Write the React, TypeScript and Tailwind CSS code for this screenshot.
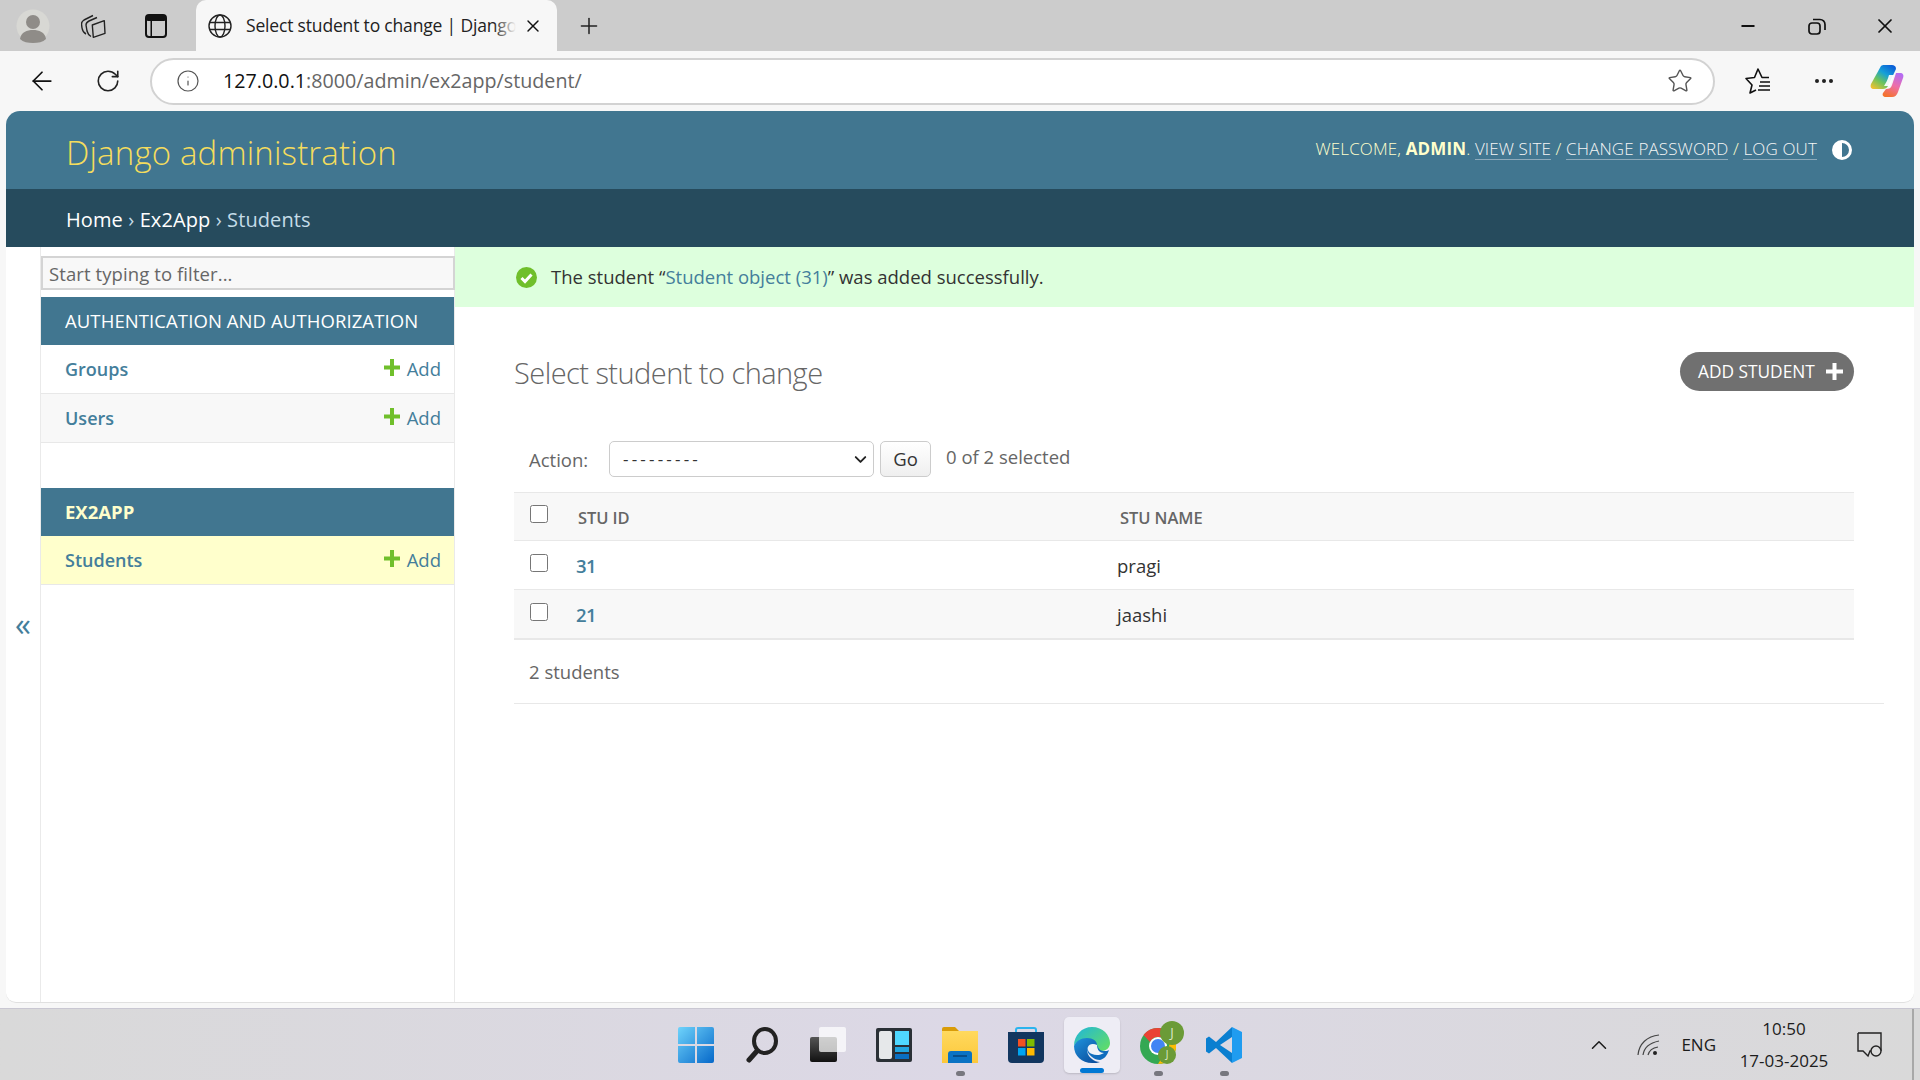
import React from "react";
import { ArrowLeft, RotateCw, Info, Star, Plus, X, Minus, ChevronDown, ChevronUp } from "lucide-react";

const base = "font-['Open_Sans',sans-serif]";

function GreenPlus() {
  return (
    <svg width="16" height="17" viewBox="0 0 16 17" className="mr-[7px] mb-[3px]">
      <path d="M6 0h4v6.500h6v4h-6V17H6v-6.500H0v-4h6z" fill="#70bf2b" />
    </svg>
  );
}

function SideRow({ name, bg }: { name: string; bg: string }) {
  return (
    <div className={`h-[49px] flex items-center pl-[24px] pr-[13px] border-b border-[#e8e8e8] ${bg}`}>
      <span className="text-[18px] font-semibold text-[#447e9b] flex-1">{name}</span>
      <GreenPlus />
      <span className="text-[18.500px] text-[#447e9b]">Add</span>
    </div>
  );
}

function Start() {
  return (
    <svg width="36" height="36" viewBox="0 0 36 36">
      <defs>
        <linearGradient id="st" x1="0" y1="0" x2="1" y2="1">
          <stop offset="0" stopColor="#6fd3fb" />
          <stop offset="1" stopColor="#0668c9" />
        </linearGradient>
      </defs>
      <path d="M2 0h15v17H0V2a2 2 0 0 1 2-2zM19 0h15a2 2 0 0 1 2 2v15H19zM0 19h17v17H2a2 2 0 0 1-2-2zM19 19h17v15a2 2 0 0 1-2 2H19z" fill="url(#st)" />
    </svg>
  );
}

function TaskSearch() {
  return (
    <svg width="32" height="36" viewBox="0 0 32 36" fill="none" stroke="#222" strokeLinecap="round">
      <ellipse cx="19" cy="14" rx="11" ry="12" strokeWidth="4" />
      <path d="M11 24 L3 33" strokeWidth="5" />
    </svg>
  );
}

function TaskView() {
  return (
    <svg width="36" height="36" viewBox="0 0 36 36">
      <defs>
        <linearGradient id="tv" x1="0" y1="0" x2="0" y2="1">
          <stop offset="0" stopColor="#555" />
          <stop offset="1" stopColor="#111" />
        </linearGradient>
      </defs>
      <rect x="0" y="10" width="27" height="25" rx="2" fill="url(#tv)" />
      <rect x="9" y="0" width="27" height="25" rx="2" fill="#ffffff" fillOpacity="0.72" />
    </svg>
  );
}

function Widgets() {
  return (
    <svg width="36" height="36" viewBox="0 0 36 36">
      <rect width="36" height="34" y="1" rx="2" fill="#2a3036" />
      <rect x="3" y="4" width="13" height="28" rx="2" fill="#e6e8ea" />
      <rect x="19" y="4" width="14" height="14" fill="#4fd8ff" />
      <rect x="19" y="20" width="14" height="5" fill="#21a6e0" />
      <rect x="19" y="27" width="14" height="5" fill="#0a6fc2" />
    </svg>
  );
}

function Files() {
  return (
    <svg width="36" height="36" viewBox="0 0 36 36">
      <defs>
        <linearGradient id="fo" x1="0" y1="0" x2="0" y2="1">
          <stop offset="0" stopColor="#ffd95e" />
          <stop offset="1" stopColor="#fcc73a" />
        </linearGradient>
      </defs>
      <path d="M0 2a2 2 0 0 1 2-2h11l4 4h19v2H0z" fill="#d99c08" />
      <rect x="0" y="4" width="36" height="32" fill="url(#fo)" />
      <path d="M6 36V27a3 3 0 0 1 3-3h18a3 3 0 0 1 3 3v9z" fill="#0a73c4" />
      <rect x="11" y="28" width="14" height="2" fill="#064f8c" />
    </svg>
  );
}

function Store() {
  return (
    <svg width="36" height="36" viewBox="0 0 36 36">
      <path d="M8 6V3a2 2 0 0 1 2-2h16a2 2 0 0 1 2 2v3" fill="none" stroke="#2bb4ee" strokeWidth="2" />
      <path d="M0 5h36v27a4 4 0 0 1-4 4H4a4 4 0 0 1-4-4z" fill="#12365f" />
      <rect x="10" y="12" width="7.500" height="7.500" fill="#f25022" />
      <rect x="19" y="12" width="7.500" height="7.500" fill="#7fba00" />
      <rect x="10" y="21" width="7.500" height="7.500" fill="#00a4ef" />
      <rect x="19" y="21" width="7.500" height="7.500" fill="#ffb900" />
    </svg>
  );
}

function Edge() {
  return (
    <svg width="36" height="36" viewBox="0 0 36 36">
      <defs>
        <linearGradient id="e1" x1="0" y1="0" x2="1" y2="0.800">
          <stop offset="0" stopColor="#1fb5dc" />
          <stop offset="1" stopColor="#5fdc6a" />
        </linearGradient>
        <linearGradient id="e2" x1="0" y1="0" x2="0.800" y2="1">
          <stop offset="0" stopColor="#1f93dd" />
          <stop offset="1" stopColor="#0a4f9e" />
        </linearGradient>
      </defs>
      <path d="M18 0c11 0 18 8 18 16 0 5-4 8-9 8h-7c3-5 0-12-7-12-6 0-11 3-13 7C0 8 8 0 18 0z" fill="url(#e1)" />
      <path d="M0 19c2-5 7-8 13-8 6 0 10 3 10 7-3-1-7-1-9 2-2 4 0 9 4 12 2 2 5 3 8 3-2 1-5 1-8 1C8 36 0 29 0 19z" fill="url(#e2)" />
      <path d="M14 20c2-3 6-3 9-2 1 3 3 6 7 6 2 0 4 0 5-1-2 6-5 9-9 10-3 0-6-1-8-3-4-3-6-7-4-10z" fill="#0f6cbd" />
      <path d="M23 18c-4-2-8-1-9 2-1 3 1 6 4 7 4 2 9 1 12-1-4 0-7-3-7-8z" fill="#eef2f8" />
    </svg>
  );
}

function Chrome() {
  return (
    <div className="relative w-[44px] h-[44px] ml-[8px]">
      <svg width="36" height="36" viewBox="0 0 36 36" className="absolute left-0 top-[5px]">
        <circle cx="18" cy="18" r="18" fill="#34a853" />
        <path d="M18 0a18 18 0 0 1 15.600 9H18a9 9 0 0 0-8 5L3.500 7A18 18 0 0 1 18 0z" fill="#ea4335" />
        <path d="M33.600 9A18 18 0 0 1 18 36l8-13a9 9 0 0 0 0-14z" fill="#fbbc04" />
        <circle cx="18" cy="18" r="9" fill="#fff" />
        <circle cx="18" cy="18" r="7" fill="#4285f4" />
      </svg>
      <span className="absolute left-[20px] top-[-2px] w-[24px] h-[24px] rounded-full bg-[#6b9b37] text-[#dfe9cc] text-[13px] flex items-center justify-center">J</span>
      <span className="absolute left-[18px] top-[23px] w-[18px] h-[18px] rounded-full bg-[#6b9b37] text-[#dfe9cc] text-[10px] flex items-center justify-center">J</span>
    </div>
  );
}

function VSCode() {
  return (
    <svg width="36" height="36" viewBox="0 0 36 36">
      <path d="M26 0l10 5v26l-10 5z" fill="#1f9cf0" />
      <path d="M26 0L10 15 3 9.500 0 11.500V24.500L3 26.500 10 21l16 15V26L14 18 26 10z" fill="#0a7fd0" />
    </svg>
  );
}

function Copilot() {
  return (
    <svg width="34" height="32" viewBox="0 0 34 32">
      <defs>
        <linearGradient id="c1" x1="0.1" y1="1" x2="0.8" y2="0">
          <stop offset="0" stopColor="#f5c12e" />
          <stop offset="0.35" stopColor="#6cc35c" />
          <stop offset="0.65" stopColor="#15a0d8" />
          <stop offset="1" stopColor="#0b5fd8" />
        </linearGradient>
        <linearGradient id="c2" x1="0.7" y1="0" x2="0.3" y2="1">
          <stop offset="0" stopColor="#b56cf2" />
          <stop offset="0.5" stopColor="#ee6fa8" />
          <stop offset="1" stopColor="#f4722c" />
        </linearGradient>
      </defs>
      <path d="M11 1c1-1 2-1 3-1h8c2 0 4 1 4 4l-8 17c-1 2-3 3-5 3H4c-3 0-4-2-3-5z" fill="url(#c1)" />
      <path d="M26 8h4c3 0 4 2 3 5l-5 14c-1 3-3 5-6 5h-6c-3 0-4-2-3-4l3-4c3 0 5-1 6-4z" fill="url(#c2)" />
      <path d="M19 10h5l-4 11h-6c2-3 4-7 5-11z" fill="#fff" fillOpacity="0.92" />
    </svg>
  );
}

const taskIcons: { key: string; el: React.ReactNode; dot?: boolean; active?: boolean }[] = [
  { key: "start", el: <Start /> },
  { key: "search", el: <TaskSearch /> },
  { key: "view", el: <TaskView /> },
  { key: "widgets", el: <Widgets /> },
  { key: "files", el: <Files />, dot: true },
  { key: "store", el: <Store /> },
  { key: "edge", el: <Edge />, active: true },
  { key: "chrome", el: <Chrome />, dot: true },
  { key: "vscode", el: <VSCode />, dot: true },
];

function TaskButton({ el, dot, active }: { el: React.ReactNode; dot?: boolean; active?: boolean }) {
  return (
    <div className={`relative w-[56px] h-[56px] mx-[5px] rounded-[5px] flex items-center justify-center ${active ? "bg-[#eeedf5] shadow-[0_1px_2px_rgba(0,0,0,0.15)]" : ""}`}>
      {el}
      {dot && <span className="absolute bottom-[-3px] w-[9px] h-[5px] rounded-full bg-[#77777e]" />}
      {active && <span className="absolute bottom-[0px] w-[24px] h-[5px] rounded-full bg-[#0078d4]" />}
    </div>
  );
}

export default function App() {
  return (
    <div className={`${base} w-[1920px] h-[1080px] flex flex-col overflow-hidden bg-[#f7f7f7] text-[#333]`}>
      {/* tab strip */}
      <div className="h-[51px] bg-[#cccccc] flex items-end shrink-0">
        <div className="w-[66px] h-[51px] flex items-center justify-center">
          <svg width="34" height="34" viewBox="0 0 34 34">
            <circle cx="17" cy="17" r="16.500" fill="#d8d8d4" />
            <circle cx="17" cy="13" r="7" fill="#8f8c88" />
            <path d="M4 30c1-7 7-9 13-9s12 2 13 9c-3 3-8 4-13 4s-10-1-13-4z" fill="#8f8c88" />
          </svg>
        </div>
        <div className="w-[54px] h-[51px] flex items-center justify-center">
          <svg width="25" height="24" viewBox="0 0 25 24" fill="none" stroke="#222" strokeWidth="1.400" strokeLinejoin="round">
            <path d="M5 20C3 19 1.500 17 1 14L.5 10C.5 8 1.500 7 3 6L12 1.500" />
            <path d="M10 22.500C7.500 21 6.500 19 6 17L5 11C5 9 6 8 8 7L16 3.500" />
            <path d="M11.300 11L23.300 6.700 24 19.300 12.300 23.300z" fill="#cccccc" />
          </svg>
        </div>
        <div className="w-[76px] pr-[5px] h-[51px] flex items-center justify-center">
          <svg width="22" height="24" viewBox="0 0 22 24">
            <rect x="1" y="1" width="20" height="22" rx="3" fill="none" stroke="#111" strokeWidth="2" />
            <rect x="1" y="1" width="20" height="6" rx="2" fill="#111" />
            <rect x="5.500" y="6" width="1.500" height="17" fill="#111" />
          </svg>
        </div>
        <div className="w-[361px] h-[51px] bg-[#f7f7f7] rounded-t-[10px] flex items-center pl-[12px] relative">
          <svg width="24" height="24" viewBox="0 0 24 24" fill="none" stroke="#222" strokeWidth="1.400">
            <circle cx="12" cy="12" r="11" />
            <ellipse cx="12" cy="12" rx="5" ry="11" />
            <path d="M1.500 8.500h21M1.500 15.500h21" />
          </svg>
          <span className="ml-[14px] w-[270px] overflow-hidden whitespace-nowrap text-[17.500px] text-[#222] tracking-[-0.01em]">Select student to change | Django</span>
          <span className="absolute right-[41px] top-[10px] w-[22px] h-[30px] bg-linear-to-r from-transparent to-[#f7f7f7]" />
          <X size={20} strokeWidth={1.700} className="absolute right-[14px] text-[#111]" />
        </div>
        <div className="w-[64px] h-[51px] flex items-center justify-center">
          <Plus size={26} strokeWidth={1.400} className="text-[#222]" />
        </div>
        <div className="flex-1" />
        <div className="flex items-center h-[51px] text-[#111]">
          <div className="w-[69px] flex justify-center"><Minus size={20} strokeWidth={2.200} /></div>
          <div className="w-[69px] flex justify-center">
            <svg width="18" height="18" viewBox="0 0 18 18" fill="none" stroke="#111" strokeWidth="1.700">
              <rect x="1" y="6" width="11" height="11" rx="3" />
              <path d="M5 2.500h7a5 5 0 0 1 5 5V13" />
            </svg>
          </div>
          <div className="w-[69px] pr-[2px] flex justify-center"><X size={24} strokeWidth={1.700} /></div>
        </div>
      </div>

      {/* toolbar */}
      <div className="h-[60px] shrink-0 flex items-center relative">
        <div className="w-[84px] shrink-0 flex justify-center"><ArrowLeft size={30} strokeWidth={1.400} className="text-[#111]" /></div>
        <div className="w-[48px] shrink-0 flex justify-center"><RotateCw size={26} strokeWidth={1.500} className="text-[#222]" /></div>
        <div className="w-[18px] shrink-0" />
        <div className="w-[1565px] shrink-0 h-[47px] bg-white border-2 border-[#d2d2d2] rounded-full flex items-center">
          <div className="w-[71px] pl-[1px] flex justify-center"><Info size={24} strokeWidth={1.200} className="text-[#555]" /></div>
          <span className="text-[19.700px] text-[#111]">127.0.0.1</span>
          <span className="text-[19.700px] text-[#666]">:8000/admin/ex2app/student/</span>
          <span className="flex-1" />
          <Star size={26} strokeWidth={1.300} className="text-[#555] mr-[20px]" />
        </div>
        <div className="w-[85px] shrink-0 pl-[1px] flex justify-center">
          <svg width="26" height="26" viewBox="0 0 26 26" fill="none" stroke="#111" strokeWidth="1.600" strokeLinejoin="round">
            <path d="M24 9.500h-7L13 1 9.500 9.500 1 10.500l6 6.500-2 8 6-3" />
            <path d="M15 14h10M14 18h11M13 22h12" />
          </svg>
        </div>
        <div className="w-[48px] shrink-0 flex justify-center gap-[3px]">
          <span className="w-[4px] h-[4px] rounded-full bg-[#222]" />
          <span className="w-[4px] h-[4px] rounded-full bg-[#222]" />
          <span className="w-[4px] h-[4px] rounded-full bg-[#222]" />
        </div>
        <div className="w-[72px] shrink-0 pl-[6px] flex justify-center"><Copilot /></div>
      </div>

      {/* page */}
      <div className="mx-[6px] w-[1908px] h-[892px] shrink-0 bg-white rounded-t-[14px] rounded-b-[10px] overflow-hidden flex flex-col border-b border-[#e0e0e0]">
        <div className="h-[78px] shrink-0 bg-[#417690] flex items-center pl-[60px] pr-[62px]">
          <span className="text-[33px] font-light text-[#f5dd5d] tracking-[0.005em] flex-1 pt-[5px]">Django administration</span>
          <div className="flex items-center text-[17px] uppercase font-light text-[#ffffcc] tracking-[0.008em] pb-[2px] whitespace-nowrap">
            <span>Welcome,&nbsp;</span>
            <span className="font-bold">admin</span>
            <span>.&nbsp;</span>
            <span className="text-[#f5f5f5] border-b border-[#8daabb] leading-[20px]">View site</span>
            <span>&nbsp;/&nbsp;</span>
            <span className="text-[#f5f5f5] border-b border-[#8daabb] leading-[20px]">Change password</span>
            <span>&nbsp;/&nbsp;</span>
            <span className="text-[#f5f5f5] border-b border-[#8daabb] leading-[20px]">Log out</span>
            <svg width="20" height="20" viewBox="0 0 20 20" className="ml-[15px] mt-[2px]">
              <circle cx="10" cy="10" r="8.500" fill="#417690" stroke="#fff" strokeWidth="3" />
              <path d="M10 1a9 9 0 0 0 0 18z" fill="#fff" />
            </svg>
          </div>
        </div>
        <div className="h-[58px] shrink-0 bg-[#264b5d] flex items-center pl-[60px] pt-[3px] text-[20px] tracking-[0.005em] text-[#c4dce8]">
          <span className="text-white">Home</span>
          <span>&nbsp;›&nbsp;</span>
          <span className="text-white">Ex2App</span>
          <span>&nbsp;›&nbsp;</span>
          <span>Students</span>
        </div>
        <div className="flex-1 flex min-h-0">
          <div className="w-[35px] shrink-0 border-r border-[#eaeaea] flex items-start justify-center pt-[361px] text-[#447e9b] text-[32px] leading-[32px]">«</div>
          <div className="w-[414px] shrink-0 border-r border-[#eaeaea] flex flex-col pt-[9px]">
            <input
              readOnly
              placeholder="Start typing to filter..."
              className="h-[34px] mb-[7px] mr-[-1px] bg-[#f8f8f8] border-2 border-[#d4d4d4] pl-[6px] text-[18.500px] tracking-[0.005em] placeholder:text-[#666] outline-none"
            />
            <div className="h-[48px] bg-[#417690] flex items-center pl-[24px] text-[18.500px] tracking-[0.005em] uppercase text-white">Authentication and Authorization</div>
            <SideRow name="Groups" bg="bg-white" />
            <SideRow name="Users" bg="bg-[#f8f8f8]" />
            <div className="h-[45px] shrink-0" />
            <div className="h-[48px] bg-[#417690] flex items-center pl-[24px] text-[18.500px] uppercase font-bold text-[#ffffcc]">Ex2App</div>
            <SideRow name="Students" bg="bg-[#ffffcc]" />
          </div>
          <div className="flex-1 min-w-0 flex flex-col">
            <div className="h-[60px] shrink-0 bg-[#dfd] flex items-center pl-[61px] text-[18.500px] text-[#333]">
              <svg width="21" height="21" viewBox="0 0 21 21" className="mr-[14px]">
                <circle cx="10.500" cy="10.500" r="10.500" fill="#70bf2b" />
                <path d="M5.500 11l3.500 3.500 6.500-7" fill="none" stroke="#fff" strokeWidth="3" />
              </svg>
              <span>The student “</span>
              <span className="text-[#447e9b]">Student object (31)</span>
              <span>” was added successfully.</span>
            </div>
            <div className="pl-[59px] pr-[60px] flex flex-col">
              <div className="mt-[45px] h-[39px] flex items-center justify-between">
                <span className="text-[29px] font-light text-[#666] tracking-[-0.019em] pt-[3px]">Select student to change</span>
                <div className="h-[39px] w-[174px] rounded-full bg-[#707070] text-white flex items-center pl-[18px] text-[17.300px] uppercase gap-[11px]">
                  <span>Add student</span>
                  <svg width="17" height="17" viewBox="0 0 17 17"><path d="M6.500 0h4v6.500H17v4h-6.500V17h-4v-6.500H0v-4h6.500z" fill="#fff" /></svg>
                </div>
              </div>
              <div className="mt-[50px] h-[36px] flex items-center pl-[15px] text-[18.500px] text-[#666]">
                <span className="w-[80px] pt-[2px]">Action:</span>
                <div className="relative w-[265px] h-[36px]">
                  <select className="appearance-none w-full h-full border border-[#ccc] rounded-[5px] bg-white pl-[13px] text-[17px] tracking-[3.200px] text-[#333] outline-none">
                    <option>---------</option>
                  </select>
                  <ChevronDown size={19} strokeWidth={2.400} className="absolute right-[4px] top-[9px] text-[#222]" />
                </div>
                <div className="ml-[6px] w-[51px] h-[36px] border border-[#ccc] rounded-[5px] bg-linear-to-b from-white to-[#efefef] flex items-center justify-center text-[#333]">Go</div>
                <span className="ml-[15px] pb-[5px]">0 of 2 selected</span>
              </div>
              <div className="mt-[15px] flex flex-col text-[18.500px]">
                <div className="h-[49px] flex items-center bg-[#f8f8f8] border-y border-[#e8e8e8] text-[16.500px] uppercase font-semibold text-[#666] tracking-[-0.005em]">
                  <div className="w-[64px] pl-[16px] pb-[5px] flex"><input type="checkbox" readOnly className="w-[18px] h-[18px]" /></div>
                  <div className="w-[542px] pt-[3px]">Stu ID</div>
                  <div className="pt-[3px]">Stu name</div>
                </div>
                <div className="h-[49px] flex items-center border-b border-[#e8e8e8]">
                  <div className="w-[62px] pl-[16px] pb-[4px] flex"><input type="checkbox" readOnly className="w-[18px] h-[18px]" /></div>
                  <div className="w-[541px] font-semibold text-[#447e9b] tracking-[-0.03em] pt-[1px]">31</div>
                  <div className="pt-[1px]">pragi</div>
                </div>
                <div className="h-[50px] flex items-center bg-[#f8f8f8] border-b-2 border-[#e8e8e8]">
                  <div className="w-[62px] pl-[16px] pb-[4px] flex"><input type="checkbox" readOnly className="w-[18px] h-[18px]" /></div>
                  <div className="w-[541px] font-semibold text-[#447e9b] tracking-[-0.03em] pt-[1px]">21</div>
                  <div className="pt-[1px]">jaashi</div>
                </div>
              </div>
              <div className="h-[64px] mr-[-30px] flex items-center pl-[15px] border-b border-[#e8e8e8] text-[18.500px] text-[#666]">2 students</div>
            </div>
          </div>
        </div>
      </div>

      {/* taskbar */}
      <div className="mt-[5px] flex-1 border-t border-[#c9c7d2] bg-linear-to-r from-[#d9d9d9] via-[#dcd8e6] to-[#d9d9d9] flex items-center relative text-[#1c1c1c]">
        <div className="w-[663px] shrink-0" />
        {taskIcons.map((t) => (
          <TaskButton key={t.key} el={t.el} dot={t.dot} active={t.active} />
        ))}
        <div className="flex-1" />
        <ChevronUp size={26} strokeWidth={1.400} className="mr-[25px]" />
        <svg width="24" height="22" viewBox="0 0 24 22" fill="none" stroke="#444" strokeWidth="1.200" className="mr-[20px]">
          <path d="M1 21C2 10 10 2 22 1M6 21c1-7 6-12 16-14M11 21c1-4 4-7 10-8" />
          <circle cx="18" cy="19" r="2" fill="#222" stroke="none" />
        </svg>
        <span className="text-[17px] mr-[22px]">ENG</span>
        <div className="w-[92px] mr-[27px] flex flex-col items-center text-[17px] leading-[32px]">
          <span>10:50</span>
          <span className="whitespace-nowrap">17-03-2025</span>
        </div>
        <svg width="26" height="26" viewBox="0 0 26 26" fill="none" stroke="#222" strokeWidth="1.400" className="mr-[29px]">
          <path d="M1 1h23v18M1 1v18h5l5 5 2-5h5" />
          <circle cx="19" cy="19" r="5" fill="#dcdcdc" />
        </svg>
        <span className="w-[2px] h-full bg-[#a8a8a8] mr-[6px]" />
      </div>
    </div>
  );
}
